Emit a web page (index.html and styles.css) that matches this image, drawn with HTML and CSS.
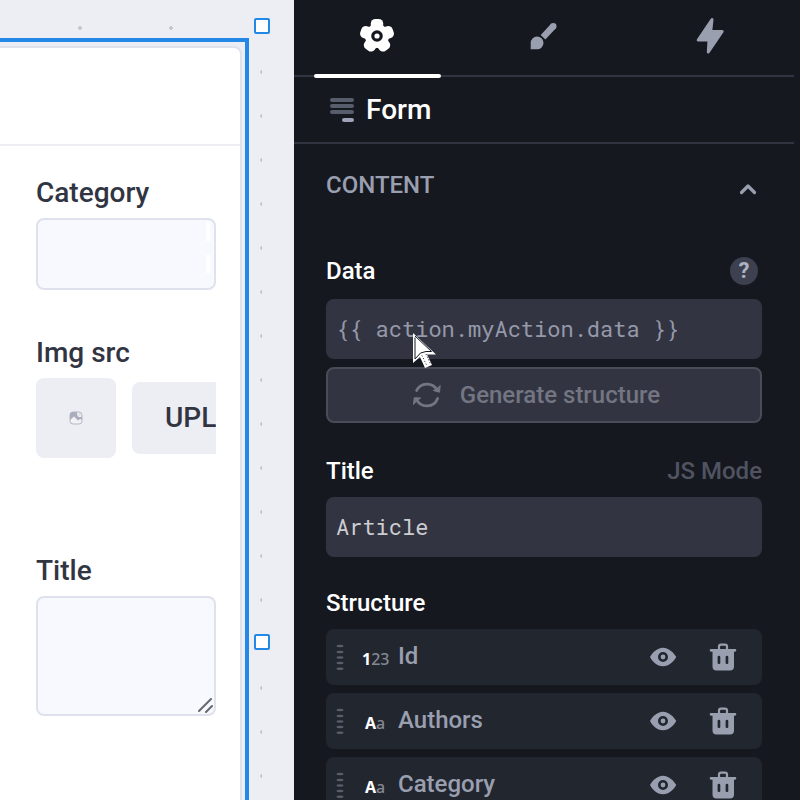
FILE: index.html
```html
<!DOCTYPE html>
<html lang="en">
<head>
<meta charset="utf-8">
<meta name="viewport" content="width=device-width, initial-scale=1">
<title>Form editor</title>
<link rel="stylesheet" href="styles.css">
</head>
<body>
<svg class="sprite" aria-hidden="true">
  <symbol id="eye" viewBox="0 0 28 28">
    <path fill="currentColor" fill-rule="evenodd" d="M1 14C3 10 8 4.700 14 4.700S25 10 27.300 14C25 18 20 23.300 14 23.300S3 18 1 14ZM14 9a5 5 0 1 0 0 10a5 5 0 1 0 0-10Z"/>
    <circle cx="14" cy="14" r="2.400" fill="currentColor"/>
  </symbol>
  <symbol id="trash" viewBox="0 0 28 28">
    <path fill="none" stroke="currentColor" stroke-width="2.200" d="M10 7V3.500Q10 1.700 12 1.700H16Q18 1.700 18 3.500V7"/>
    <path fill="currentColor" fill-rule="evenodd" d="M2 6H26Q27.300 6 27.300 7.300T26 8.700H25V23.500Q25 27.500 21 27.500H7.500Q3.500 27.500 3.500 23.500V8.700H2Q.700 8.700 .700 7.300T2 6ZM10 12.700Q8.600 12.700 8.600 14V20Q8.600 21 10 21T11.300 20V14Q11.300 12.700 10 12.700ZM18 12.700Q16.600 12.700 16.600 14V20Q16.600 21 18 21T19.300 20V14Q19.300 12.700 18 12.700Z"/>
  </symbol>
  <symbol id="grip" viewBox="0 0 8 26">
    <g fill="currentColor"><ellipse cx="4" cy="2" rx="3.500" ry="1.200"/><ellipse cx="4" cy="8" rx="3.500" ry="1.200"/><ellipse cx="4" cy="13.500" rx="3.500" ry="1.200"/><ellipse cx="4" cy="19" rx="3.500" ry="1.200"/><ellipse cx="4" cy="24.700" rx="3.500" ry="1.200"/></g>
  </symbol>
</svg>
<div class="editor">
  <main class="canvas">
    <div class="selection">
      <span class="handle handle-corner"></span>
      <span class="handle handle-side"></span>
      <form class="card">
        <div class="card-header"></div>
        <div class="card-body">
          <div class="group">
            <label for="category">Category</label>
            <select id="category" class="control"><option></option></select>
          </div>
          <div class="group group-upload">
            <label for="upload">Img src</label>
            <div class="upload-row">
              <div class="preview">
                <svg width="14" height="14" viewBox="0 0 14 14"><rect x="1" y="1" width="12" height="12" rx="3" fill="#f0f1f5" stroke="#b4b7c4"/><path d="M1 9V4Q1 1 4 1H8.300Q7.300 3.500 8.800 5.200Q10.500 6.800 13 5.500V8.500L11 8L9 9.500L5 5.500Z" fill="#a9adbc"/><circle cx="10.700" cy="3.500" r="1.300" fill="#dcdfe6"/></svg>
              </div>
              <button id="upload" class="upload" type="button">UPLOAD</button>
            </div>
          </div>
          <div class="group">
            <label for="title">Title</label>
            <div class="area-wrap">
              <textarea id="title" class="control area"></textarea>
              <svg class="resizer" width="16" height="16" viewBox="0 0 16 16"><path d="M2 14L14 2M9 15L15 9" fill="none" stroke="#666970" stroke-width="2" stroke-linecap="round"/></svg>
            </div>
          </div>
        </div>
      </form>
    </div>
  </main>
  <aside class="panel">
    <nav class="tabs">
      <button class="tab active" type="button" aria-label="Settings">
        <svg width="36" height="36" viewBox="0 0 36 36"><g fill="currentColor"><circle cx="18" cy="18" r="12"/><rect id="lobe" x="11.800" y="1" width="12.400" height="15" rx="4.500"/><use href="#lobe" transform="rotate(72 18 18)"/><use href="#lobe" transform="rotate(144 18 18)"/><use href="#lobe" transform="rotate(216 18 18)"/><use href="#lobe" transform="rotate(288 18 18)"/></g><circle cx="18" cy="18" r="4.200" fill="none" stroke="#15181f" stroke-width="3.200"/></svg>
      </button>
      <button class="tab" type="button" aria-label="Style">
        <svg width="36" height="36" viewBox="0 0 36 36"><path fill="currentColor" d="M4.700 31.300V25A6.400 6.400 0 1 1 11.100 31.300Z"/><path d="M17 19.300L27.300 8.300" stroke="currentColor" stroke-width="6.400"/><circle cx="27.300" cy="8.300" r="3.200" fill="currentColor"/></svg>
      </button>
      <button class="tab" type="button" aria-label="Actions">
        <svg width="36" height="40" viewBox="1 1 36 40"><path fill="currentColor" stroke="currentColor" stroke-width="3" stroke-linejoin="round" d="M20 4.500L6.200 25H17L16.300 37L30.200 16.500H18.700L20 4.500Z"/></svg>
      </button>
    </nav>
    <header class="panel-title">
      <svg width="24" height="24" viewBox="0 0 24 24"><g fill="#585d6c"><rect width="24" height="4" rx="2"/><rect y="6" width="24" height="4" rx="2"/><rect y="12" width="24" height="4" rx="2"/></g><rect x="12" y="20" width="12" height="4" rx="2" fill="#9da2b4"/></svg>
      <h1>Form</h1>
    </header>
    <section class="section">
      <div class="section-head">
        <h2>CONTENT</h2>
        <button class="icon-button" type="button" aria-label="Collapse content">
          <svg width="28" height="28" viewBox="0 0 28 28"><path d="M7.500 17.500L14 11L20.500 17.500" fill="none" stroke="currentColor" stroke-width="3.200" stroke-linecap="round" stroke-linejoin="round"/></svg>
        </button>
      </div>
      <div class="label-row label-row-help">
        <label for="data">Data</label>
        <button class="help" type="button">?</button>
      </div>
      <div class="data-field">
        <input id="data" class="input" type="text" placeholder="{{ action.myAction.data }}">
        <svg class="cursor" width="26" height="40" viewBox="0 0 26 40"><path d="M1 1V31L8 25L13 36L20 33L15 22.500H24Z" fill="#fff"/><path d="M3 5.500V27L8.500 21L14 19.500H19.500L3 4" fill="none" stroke="#15181f" stroke-width="1"/><path d="M10 23.500L15 34M14 22L18.500 32" fill="none" stroke="#15181f" stroke-width="1" stroke-dasharray="1 2"/></svg>
      </div>
      <button class="generate" type="button" disabled>
        <svg width="30" height="28" viewBox="0 0 30 28"><g fill="none" stroke="currentColor" stroke-width="2.800" stroke-linecap="round" stroke-linejoin="round"><path d="M4.600 9.500C8.500 1.500 20.500 .500 25.500 9.500"/><path d="M25.600 17.500C22 27 8.500 27.500 4.300 18"/></g><path fill="currentColor" stroke="currentColor" stroke-linejoin="round" d="M28.200 4.500L27.500 11.200L21.300 9.500Q25 8.500 28.200 4.500ZM1.500 23.500L2.200 16.800L8.700 17Q5 19 1.500 23.500Z"/></svg>
        Generate structure
      </button>
      <div class="label-row spaced">
        <label for="form-title">Title</label>
        <button class="mode" type="button">JS Mode</button>
      </div>
      <input id="form-title" class="input" type="text" value="Article">
      <div class="label-row spaced"><h3>Structure</h3></div>
      <ul class="rows">
        <li class="row"><svg class="grip" width="8" height="26"><use href="#grip"/></svg><span class="kind"><b>1</b>23</span><span class="name">Id</span><button class="icon-button" type="button" aria-label="Toggle Id"><svg width="28" height="28"><use href="#eye"/></svg></button><button class="icon-button" type="button" aria-label="Delete Id"><svg width="28" height="28"><use href="#trash"/></svg></button></li>
        <li class="row"><svg class="grip" width="8" height="26"><use href="#grip"/></svg><span class="kind"><b>A</b>a</span><span class="name">Authors</span><button class="icon-button" type="button" aria-label="Toggle Authors"><svg width="28" height="28"><use href="#eye"/></svg></button><button class="icon-button" type="button" aria-label="Delete Authors"><svg width="28" height="28"><use href="#trash"/></svg></button></li>
        <li class="row"><svg class="grip" width="8" height="26"><use href="#grip"/></svg><span class="kind"><b>A</b>a</span><span class="name">Category</span><button class="icon-button" type="button" aria-label="Toggle Category"><svg width="28" height="28"><use href="#eye"/></svg></button><button class="icon-button" type="button" aria-label="Delete Category"><svg width="28" height="28"><use href="#trash"/></svg></button></li>
      </ul>
    </section>
  </aside>
</div>
</body>
</html>
```
FILE: styles.css
```css
* {
  box-sizing: border-box;
}

body {
  margin: 0;
  font-family: Roboto, "Liberation Sans", sans-serif;
  font-size: 24px;
  line-height: 28px;
  font-weight: 500;
}

button,
input,
select,
textarea {
  font: inherit;
  color: inherit;
  margin: 0;
  padding: 0;
  border: 0;
  background: none;
}

h1,
h2,
h3,
ul {
  margin: 0;
  padding: 0;
  font: inherit;
  list-style: none;
}

svg {
  display: block;
  flex-shrink: 0;
}

.sprite {
  position: absolute;
  width: 0;
  height: 0;
}

.editor {
  display: grid;
  grid-template-columns: 147fr 253fr;
  height: 100vh;
  overflow: hidden;
}

/* Canvas with its dotted grid */
.canvas {
  display: flex;
  min-width: 0;
  padding: 38px 45px 0 0;
  background:
    linear-gradient(#edeef4, #edeef4) right / 32px 100% no-repeat,
    radial-gradient(circle at 45px 22px, #c4c6d1 0 2px, transparent 2px) 35px 6px / 91px 44px,
    #edeef4;
}

.selection {
  position: relative;
  display: flex;
  flex: 1;
  min-width: 0;
  padding: 4px 3px 0 0;
  border: solid #2388e8;
  border-width: 4px 4px 0 0;
  background: #edeef4;
}

.handle {
  position: absolute;
  right: -25px;
  width: 16px;
  height: 16px;
  border: 2px solid #2388e8;
  border-radius: 2px;
  background: #fff;
}

.handle-corner {
  top: -24px;
}

.handle-side {
  top: 592px;
}

.card {
  flex: 1;
  min-width: 0;
  border: solid #dfe1ec;
  border-width: 2px 2px 0 0;
  border-radius: 0 8px 0 0;
  background: #fff;
}

.card-header {
  height: 98px;
  border-bottom: 2px solid #edeef4;
}

.card-body {
  display: flex;
  flex-direction: column;
  gap: 48px;
  padding: 32px 24px 32px 36px;
  color: #313542;
}

.group {
  display: flex;
  flex-direction: column;
  gap: 10px;
  font-size: 28px;
  line-height: 30px;
}

.group-upload {
  padding-bottom: 50px;
}

.control {
  display: block;
  width: 100%;
  height: 72px;
  border: 2px solid #dfe1ec;
  border-radius: 8px;
  background: #f8f9fe;
  appearance: none;
}

select.control {
  background:
    linear-gradient(#fff, #fff) right 4px top 2px / 4px 19px no-repeat,
    linear-gradient(#fff, #fff) right 4px top 35px / 4px 18px no-repeat,
    #f8f9fe;
}

.area-wrap {
  position: relative;
}

.area {
  height: 120px;
  resize: none;
}

.resizer {
  position: absolute;
  right: 3px;
  bottom: 3px;
}

.upload-row {
  display: flex;
  align-items: center;
  gap: 16px;
  overflow: hidden;
}

.preview {
  display: grid;
  place-items: center;
  flex: 0 0 80px;
  height: 80px;
  border-radius: 8px;
  background: #edeef4;
}

.upload {
  flex-shrink: 0;
  height: 72px;
  padding: 0 33px;
  border-radius: 8px;
  background: #edeef4;
}

/* Settings panel */
.panel {
  min-width: 0;
  padding-right: 6px;
  overflow: hidden;
  background: #15181f;
  color: #fff;
}

.tabs {
  display: flex;
  border-bottom: 2px solid #313440;
}

.tab {
  position: relative;
  display: grid;
  place-items: center;
  flex: 1;
  height: 75px;
  padding-bottom: 3px;
  color: #9a9fb0;
}

.tab.active {
  color: #fff;
}

.tab.active::after {
  content: "";
  position: absolute;
  right: 20px;
  bottom: -3px;
  left: 20px;
  height: 4px;
  border-radius: 2px;
  background: #fff;
}

.panel-title {
  display: flex;
  align-items: center;
  gap: 12px;
  height: 67px;
  padding: 0 36px;
  border-bottom: 2px solid #313440;
  font-size: 28px;
}

.section {
  padding: 27px 32px;
}

.section-head {
  display: flex;
  justify-content: space-between;
  height: 86px;
  color: #9a9fb0;
}

.icon-button {
  height: 28px;
  color: #9a9fb0;
}

.section-head .icon-button {
  margin-top: 4px;
}

.label-row {
  display: flex;
  align-items: center;
  justify-content: space-between;
  margin-bottom: 12px;
}

.label-row-help {
  margin-bottom: 14px;
  padding-right: 4px;
}

.spaced {
  margin-top: 34px;
}

.input + .spaced {
  margin-top: 32px;
}

.help {
  width: 28px;
  height: 28px;
  border-radius: 50%;
  background: #3d404f;
  color: #adb1c0;
  font-size: 22px;
  font-weight: 700;
}

.data-field {
  position: relative;
  margin-bottom: 8px;
}

.input {
  display: block;
  width: 100%;
  height: 60px;
  padding: 0 10px 2px;
  border-radius: 8px;
  background: #323541;
  color: #cccdd0;
  font: 400 22px/28px "Roboto Mono", "Liberation Mono", monospace;
}

.input::placeholder {
  color: #9699aa;
  opacity: 1;
}

.cursor {
  position: absolute;
  top: 33px;
  left: 86px;
  pointer-events: none;
}

.generate {
  display: flex;
  align-items: center;
  justify-content: center;
  gap: 18px;
  width: 100%;
  height: 56px;
  padding-right: 16px;
  border: 2px solid #4a4d58;
  border-radius: 8px;
  background: #323541;
  color: #737682;
}

.mode {
  color: #505361;
}

.rows {
  display: grid;
  gap: 8px;
}

.row {
  display: flex;
  align-items: center;
  height: 56px;
  padding: 0 25px 0 10px;
  border-radius: 8px;
  background: #22262f;
  color: #9a9fb0;
}

.grip {
  margin-right: 18px;
  color: #5a5e6b;
}

.kind {
  width: 26px;
  margin: 4px 10px 0 0;
  color: #858992;
  font-family: "Noto Sans", "Open Sans", sans-serif;
  font-size: 16px;
  font-weight: 500;
  text-align: center;
}

.kind b {
  color: #fff;
  font-weight: 700;
}

.name {
  flex: 1;
  margin-bottom: 2px;
}

.row .icon-button + .icon-button {
  margin-left: 32px;
}
```
